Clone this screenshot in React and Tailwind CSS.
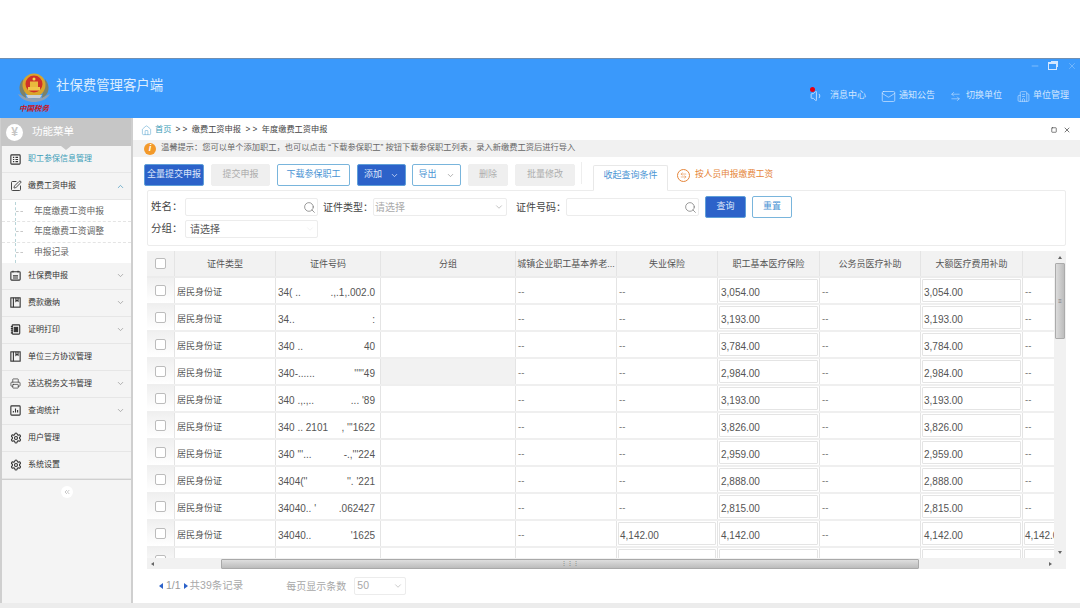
import {
  Home,
  Search,
  ChevronDown,
  ChevronUp,
  SquarePen,
  Settings,
  X,
  Minus,
  Mail,
  ArrowLeftRight,
  Building2,
  Volume1,
  Printer,
  ChevronsLeft,
  Square,
} from "lucide-react";

const FONT = "font-['Liberation_Sans','Noto_Sans_CJK_SC',sans-serif]";

/* ================= DATA ================= */

const MENU_TOP = [{ label: "职工参保信息管理", icon: "table", active: true }];

const MENU_REST = [
  { label: "社保费申报", icon: "calendar", arrow: true },
  { label: "费款缴纳", icon: "book", arrow: true },
  { label: "证明打印", icon: "note", arrow: true },
  { label: "单位三方协议管理", icon: "book" },
  { label: "送达税务文书管理", icon: "printer", arrow: true },
  { label: "查询统计", icon: "chart", arrow: true },
  { label: "用户管理", icon: "gear" },
  { label: "系统设置", icon: "gear" },
];

const SUB_MENU = ["年度缴费工资申报", "年度缴费工资调整", "申报记录"];

const COLUMNS = [
  { label: "证件类型", w: "w-[101px]" },
  { label: "证件号码", w: "w-[105px]" },
  { label: "分组", w: "w-[135px]" },
  { label: "城镇企业职工基本养老...", w: "w-[101px]" },
  { label: "失业保险", w: "w-[101px]" },
  { label: "职工基本医疗保险", w: "w-[102px]" },
  { label: "公务员医疗补助", w: "w-[101px]" },
  { label: "大额医疗费用补助", w: "w-[102px]" },
  { label: "", w: "w-[60px]" },
];

const ROWS = [
  { idL: "34(  ..", idR: ".,.1,.002.0", pay: "3,054.00" },
  { idL: "34..", idR: ":", pay: "3,193.00" },
  { idL: "340  ..", idR: "40", pay: "3,784.00" },
  { idL: "340-......", idR: "'''''49", pay: "2,984.00", shaded: true },
  { idL: "340 .,.,..", idR: "... '89", pay: "3,193.00" },
  { idL: "340 .. 2101", idR: ", '''1622", pay: "3,826.00" },
  { idL: "340 '''...", idR: "-.,'''224", pay: "2,959.00" },
  { idL: "3404(''", idR: "''. '221", pay: "2,888.00" },
  { idL: "34040.. '", idR: ".062427", pay: "2,815.00" },
  { idL: "34040..", idR: "'1625", pay: "4,142.00", full: true },
  { idL: "", idR: "", pay: "", full: true, blank: true },
];

/* ================= ICONS ================= */

function Emblem() {
  return (
    <svg width="34" height="30" viewBox="0 0 34 30" className="block">
      <path d="M1 21C4 27 12 29 17 29S30 27 33 21L28 23C24 26 10 26 6 23Z" fill="#8ea0b4" />
      <path d="M6 6C0 13 2 22 9 25L8 17Z" fill="#7d8268" />
      <path d="M28 6C34 13 32 22 25 25L26 17Z" fill="#7d8268" />
      <circle cx="17" cy="12" r="11.5" fill="#d9a52b" />
      <circle cx="17" cy="11" r="8.5" fill="#cf3128" />
      <path d="M11 14h12v3.5H11z" fill="#f0c64a" />
      <path d="M13 8.5h8v5.5h-8z" fill="#e9b93d" />
      <circle cx="17" cy="6" r="1.5" fill="#f6d84e" />
      <path d="M9 22h16l-2 3H11z" fill="#c9cfd6" />
    </svg>
  );
}

function MenuIcon({ name }) {
  const box = "w-[11px] h-[11px] text-[#333]";
  if (name === "table")
    return (
      <svg viewBox="0 0 13 13" className={box} fill="none" stroke="currentColor" strokeWidth="1.3">
        <rect x="1" y="1" width="11" height="11" rx="1" />
        <path d="M3.5 4h1.5M6.5 4h3M3.5 6.5h1.5M6.5 6.5h3M3.5 9h1.5M6.5 9h3" />
      </svg>
    );
  if (name === "calendar")
    return (
      <svg viewBox="0 0 13 13" className={box} fill="none" stroke="currentColor" strokeWidth="1.3">
        <rect x="1" y="2" width="11" height="10" rx="1" />
        <path d="M3.5 1v2M9.5 1v2M3.5 7h6M3.5 9.5h6" />
      </svg>
    );
  if (name === "book")
    return (
      <svg viewBox="0 0 13 13" className={box} fill="none" stroke="currentColor" strokeWidth="1.3">
        <rect x="1" y="1" width="11" height="11" />
        <path d="M4 1v11M7 1v4l1.2-1 1.3 1V1" />
      </svg>
    );
  if (name === "note")
    return (
      <svg viewBox="0 0 13 13" className={box} fill="none" stroke="currentColor" strokeWidth="1.3">
        <rect x="2.5" y="1" width="9" height="11" rx="1" />
        <path d="M1 3h2.5M1 5.5h2.5M1 8h2.5M1 10.5h2.5" />
        <rect x="5" y="4" width="4" height="5" fill="currentColor" />
      </svg>
    );
  if (name === "printer") return <Printer size={11} strokeWidth={1.5} className="text-[#333]" />;
  if (name === "chart")
    return (
      <svg viewBox="0 0 13 13" className={box} fill="none" stroke="currentColor" strokeWidth="1.3">
        <rect x="1" y="1" width="11" height="11" rx="1" />
        <path d="M4 9V7M6.5 9V4M9 9V6" />
      </svg>
    );
  if (name === "gear") return <Settings size={12} strokeWidth={2.2} className="text-[#333]" />;
  return <SquarePen size={12} strokeWidth={1.8} className="text-[#333]" />;
}

/* ================= HEADER ================= */

function TopLink({ icon, label, gap }) {
  return (
    <div className={`flex items-center ${gap}`}>
      {icon}
      <span className="text-[9px] text-[#d3e7ff]">{label}</span>
    </div>
  );
}

function Header() {
  return (
    <header className="h-[60px] bg-[#3a99fb] border-t border-[#6f8fb3] flex shrink-0">
      <div className="flex items-center pl-[17px]">
        <div className="flex flex-col items-center w-[34px] pt-[10px]">
          <Emblem />
          <span className="text-[7.5px] leading-[11px] text-[#c8161d] font-bold italic whitespace-nowrap">中国税务</span>
        </div>
        <span className="ml-[5px] -mt-[4px] text-[13.4px] text-[#dcedff]">社保费管理客户端</span>
      </div>
      <div className="ml-auto flex flex-col w-[259px] mr-[11px]">
        <div className="flex justify-end items-center gap-[7px] h-[11px] mt-[1px] -mr-[8px] text-[#b9dcff]">
          <Minus size={10} strokeWidth={1.3} />
          <div className="relative w-[9px] h-[8px] mr-[1px] ml-[1px] border border-[#d3e7ff] border-t-2">
            <span className="absolute -top-[3px] -right-[2px] w-[7px] h-[6px] border-t border-r border-[#d3e7ff]" />
          </div>
          <X size={10} strokeWidth={1} className="ml-[2px]" />
        </div>
        <div className="flex items-center justify-between mt-[15px] h-[20px]">
          <TopLink
            gap="gap-[6px]"
            label="消息中心"
            icon={
              <span className="relative">
                <Volume1 size={14} strokeWidth={1.4} className="text-[#d3e7ff]" />
                <span className="absolute -top-[2px] left-0 w-[5px] h-[5px] rounded-full bg-[#e60012]" />
              </span>
            }
          />
          <TopLink gap="gap-[3px]" label="通知公告" icon={<Mail size={15} strokeWidth={1.1} className="text-[#d3e7ff]" />} />
          <TopLink gap="gap-[5px]" label="切换单位" icon={<ArrowLeftRight size={11} strokeWidth={1.2} className="text-[#d3e7ff]" />} />
          <TopLink gap="gap-[3px]" label="单位管理" icon={<Building2 size={13} strokeWidth={1.1} className="text-[#d3e7ff]" />} />
        </div>
      </div>
    </header>
  );
}

/* ================= SIDEBAR ================= */

function MenuItem({ item, open }) {
  return (
    <div className="h-[27px] flex items-center pl-[7px] pr-[5px] border-b border-[#e6e6e6] shrink-0">
      <span className="w-[13px] h-[13px] flex items-center justify-center">
        <MenuIcon name={item.icon} />
      </span>
      <span className={`ml-[6px] text-[8px] ${item.active ? "text-[#3d9db8]" : "text-[#333]"}`}>{item.label}</span>
      {item.arrow &&
        (open ? (
          <ChevronUp size={9} className="ml-auto mr-[1px] text-[#4d9cc0]" />
        ) : (
          <ChevronDown size={9} className="ml-auto mr-[1px] text-[#999]" />
        ))}
    </div>
  );
}

function Sidebar() {
  return (
    <aside className="w-[133px] shrink-0 bg-[#f4f4f4] border-l-2 border-r-2 border-[#cfcfcf] flex flex-col">
      <div className="relative h-[28px] -ml-[1px] bg-[#c6c6c6] flex items-center pl-[5px] shrink-0">
        <span className="w-[17px] h-[17px] rounded-full bg-white text-[#c6c6c6] flex items-center justify-center text-[12px] font-bold">¥</span>
        <span className="ml-[9px] text-[10.5px] text-white">功能菜单</span>
        <span className="absolute left-[60px] -bottom-[4px] w-0 h-0 border-x-[5px] border-x-transparent border-t-[4px] border-t-[#c6c6c6]" />
      </div>
      {MENU_TOP.map((m) => (
        <MenuItem key={m.label} item={m} />
      ))}
      <MenuItem item={{ label: "缴费工资申报", icon: "pen", arrow: true }} open />
      <div className="bg-white pt-[2px] shrink-0">
        {SUB_MENU.map((s) => (
          <div key={s} className="h-[20.3px] flex items-center pl-[13px] border-b border-dashed border-[#e4e4e4] last:border-b-0">
            <span className="w-[9px] h-full border-l border-dashed border-[#b8d4d8] flex items-center">
              <span className="w-[7px] border-t border-dashed border-[#c8c8c8]" />
            </span>
            <span className="ml-[10px] text-[8.75px] text-[#666]">{s}</span>
          </div>
        ))}
      </div>
      {MENU_REST.map((m) => (
        <MenuItem key={m.label} item={m} />
      ))}
      <div className="border-t border-[#cfcfcf] pt-[6px] flex items-center justify-center">
        <span className="w-[12px] h-[12px] rounded-full bg-white flex items-center justify-center">
          <ChevronsLeft size={8} className="text-[#aaa]" />
        </span>
      </div>
    </aside>
  );
}

/* ================= TOOLBAR ================= */

function Btn({ kind = "gray", className = "", children }) {
  const styles = {
    primary: "bg-[#2c62c9] text-[#dfe8fb] border-[#5f9fd8]",
    gray: "bg-[#efefef] text-[#adadad] border-[#efefef]",
    outline: "bg-white text-[#4a94d4] border-[#79b5dc]",
  };
  return (
    <div className={`h-[22px] rounded-[2px] border flex items-center justify-center text-[9px] shrink-0 ${styles[kind]} ${className}`}>
      {children}
    </div>
  );
}

function Toolbar() {
  return (
    <div className="flex items-end h-[26px] pl-[11px] shrink-0">
      <div className="flex items-center h-[26px] pb-[4px]">
        <Btn kind="primary" className="w-[60px]">全量提交申报</Btn>
        <Btn className="w-[59px] ml-[7px]">提交申报</Btn>
        <Btn kind="outline" className="w-[73px] ml-[7px]">下载参保职工</Btn>
        <Btn kind="primary" className="w-[49px] ml-[7px] gap-[8px]">
          添加 <ChevronDown size={9} />
        </Btn>
        <Btn kind="outline" className="w-[49px] ml-[6px] gap-[9px]">
          导出 <ChevronDown size={9} className="text-[#999]" />
        </Btn>
        <Btn className="w-[40px] ml-[7px]">删除</Btn>
        <Btn className="w-[60px] ml-[7px]">批量修改</Btn>
      </div>
      <span className="ml-[6px] mb-[6px] h-[22px] border-l border-[#eee]" />
      <div className="relative z-10 ml-[11px] w-[75px] h-[26px] -mb-px pb-[4px] bg-white border border-[#e8e8e8] border-b-white rounded-t-[2px] flex items-center justify-center text-[9px] text-[#4a94d4]">
        收起查询条件
      </div>
      <div className="flex items-center h-[22px] mb-[4px] ml-[9px] text-[8.7px] text-[#e5853a]">
        <span className="w-[13px] h-[13px] rounded-full border border-[#e5853a] flex items-center justify-center mr-[5px]">
          <ArrowLeftRight size={7} />
        </span>
        按人员申报缴费工资
      </div>
    </div>
  );
}

/* ================= QUERY ================= */

function Field({ width, placeholder, value, search, arrow }) {
  return (
    <div className={`h-[18px] border border-[#ececec] rounded-[2px] bg-white flex items-center justify-between pl-[1px] pr-[1px] shrink-0 ${width}`}>
      <span className={`text-[10px] ${value ? "text-[#555] pl-[3px]" : "text-[#aaa]"}`}>{value || placeholder}</span>
      {search && <Search size={13} strokeWidth={1.2} className="text-[#666]" />}
      {arrow && <ChevronDown size={10} strokeWidth={1.2} className="text-[#888] mr-[1px]" />}
      {value && <ChevronDown size={10} strokeWidth={1.2} className="text-[#e6e6e6] mr-[1px]" />}
    </div>
  );
}

function QueryPanel() {
  return (
    <section className="ml-[14px] mr-[14px] h-[56px] border border-[#ececec] rounded-[2px] pl-[3px] pt-[5px] shrink-0">
      <div className="flex items-center h-[22px]">
        <span className="w-[34px] text-[10.5px] text-[#444]">姓名：</span>
        <Field width="w-[133px]" search />
        <span className="ml-[5px] w-[50px] text-[10px] text-[#444] whitespace-nowrap">证件类型：</span>
        <Field width="w-[134px]" placeholder="请选择" arrow />
        <span className="ml-[9px] w-[50px] text-[10px] text-[#444] whitespace-nowrap">证件号码：</span>
        <Field width="w-[133px]" search />
        <Btn kind="primary" className="w-[41px] ml-[6px]">查询</Btn>
        <Btn kind="outline" className="w-[40px] ml-[6px]">重置</Btn>
      </div>
      <div className="flex items-center h-[18px] mt-[2px]">
        <span className="w-[34px] text-[10.5px] text-[#444]">分组：</span>
        <Field width="w-[133px]" value="请选择" />
      </div>
    </section>
  );
}

/* ================= TABLE ================= */

function Dash({ w }) {
  return <div className={`${w} shrink-0 h-full border-r border-[#e4e4e4] flex items-center pl-[2px] pt-[4px] text-[9.5px] text-[#666]`}>--</div>;
}

function Amount({ w, value, tight }) {
  return (
    <div className={`${w} shrink-0 h-full border-r border-[#e4e4e4] pl-[1px] pr-[1px] py-[1px] overflow-hidden`}>
      <div className={`h-full border border-[#e4e4e4] rounded-[1px] bg-white flex items-center pt-[3px] text-[10px] text-[#555] whitespace-nowrap ${tight ? "" : "pl-[1px]"}`}>{value}</div>
    </div>
  );
}

function Row({ row }) {
  return (
    <div className="flex h-[27px] border-b-2 border-[#efefef] shrink-0">
      <div className="w-[28px] shrink-0 h-full bg-gradient-to-b from-[#f0f0f0] to-white border-r border-[#e4e4e4] flex items-center justify-center">
        <span className="w-[11px] h-[11px] border border-[#bcbcbc] rounded-[2px] bg-white" />
      </div>
      <div className="w-[101px] shrink-0 h-full border-r border-[#e4e4e4] flex items-center pl-[2px] pt-[4px] text-[9px] text-[#555]">
        {!row.blank && "居民身份证"}
      </div>
      <div className="w-[105px] shrink-0 h-full border-r border-[#e4e4e4] flex items-center justify-between pr-[5px] pl-[2px] pt-[4px] text-[10px] text-[#555] whitespace-nowrap">
        <span>{row.idL}</span>
        <span>{row.idR}</span>
      </div>
      <div className={`w-[135px] shrink-0 h-full border-r border-[#e4e4e4] ${row.shaded ? "bg-[#f2f2f2]" : ""}`} />
      {row.blank ? <div className="w-[101px] shrink-0 h-full border-r border-[#e4e4e4]" /> : <Dash w="w-[101px]" />}
      {row.full ? <Amount w="w-[101px]" value={row.pay} /> : <Dash w="w-[101px]" />}
      <Amount w="w-[102px]" value={row.pay} />
      {row.blank ? <div className="w-[101px] shrink-0 h-full border-r border-[#e4e4e4]" /> : <Dash w="w-[101px]" />}
      <Amount w="w-[102px]" value={row.pay} />
      {row.full ? <Amount w="w-[60px]" value={row.pay} tight /> : <Dash w="w-[60px]" />}
    </div>
  );
}

function ScrollArrow({ dir }) {
  const shape = {
    up: "border-x-[2px] border-x-transparent border-b-[3px] border-b-[#666]",
    down: "border-x-[2px] border-x-transparent border-t-[3px] border-t-[#666]",
    left: "border-y-[2px] border-y-transparent border-r-[3px] border-r-[#666]",
    right: "border-y-[2px] border-y-transparent border-l-[3px] border-l-[#666]",
  };
  return <span className={`w-0 h-0 ${shape[dir]}`} />;
}

function DataTable() {
  return (
    <section className="ml-[14px] mt-[5px] w-[919px] h-[318px] flex flex-col shrink-0">
      <div className="flex h-[307px]">
        <div className="w-[907px] overflow-hidden flex flex-col">
          <div className="flex h-[27px] bg-[#f2f2f2] border-b-2 border-[#ececec] shrink-0">
            <div className="w-[28px] shrink-0 border-r border-[#e4e4e4] flex items-center justify-center">
              <span className="w-[11px] h-[11px] border border-[#bcbcbc] rounded-[2px] bg-white" />
            </div>
            {COLUMNS.map((c) => (
              <div key={c.label} className={`${c.w} shrink-0 border-r border-[#e4e4e4] flex items-center justify-center pt-[3px] text-[9px] text-[#555] whitespace-nowrap`}>
                {c.label}
              </div>
            ))}
          </div>
          {ROWS.map((r, i) => (
            <Row key={i} row={r} />
          ))}
        </div>
        <div className="w-[12px] bg-[#f1f1f1] flex flex-col items-center shrink-0">
          <span className="h-[12px] flex items-center">
            <ScrollArrow dir="up" />
          </span>
          <div className="w-[10px] h-[76px] bg-gradient-to-r from-[#dcdcdc] to-[#bdbdbd] border border-[#ababab] rounded-[1px] flex items-center justify-center text-[6px] text-[#777]">≡</div>
          <span className="mt-auto h-[12px] flex items-center">
            <ScrollArrow dir="down" />
          </span>
        </div>
      </div>
      <div className="h-[11px] bg-[#f1f1f1] flex items-center shrink-0">
        <span className="w-[8px] ml-[4px] flex items-center">
          <ScrollArrow dir="left" />
        </span>
        <div className="ml-[62px] w-[698px] h-[10px] bg-gradient-to-b from-[#dedede] to-[#bcbcbc] border border-[#a9a9a9] rounded-[1px] flex items-center justify-center text-[6px] text-[#777]">⋮⋮⋮</div>
        <span className="ml-auto mr-[14px] flex items-center">
          <ScrollArrow dir="right" />
        </span>
      </div>
    </section>
  );
}

/* ================= PAGE ================= */

function Pager() {
  return (
    <div className="flex items-center ml-[26px] mt-[8px] h-[18px] shrink-0 text-[10px] text-[#a8a8a8]">
      <span className="w-0 h-0 border-y-[3px] border-y-transparent border-r-[4px] border-r-[#2c62c9]" />
      <span className="mx-[3px] text-[10.5px] text-[#999]">1/1</span>
      <span className="w-0 h-0 border-y-[3px] border-y-transparent border-l-[4px] border-l-[#2c62c9]" />
      <span className="ml-[2px] text-[10.5px]">共39条记录</span>
      <span className="ml-[43px]">每页显示条数</span>
      <div className="ml-[8px] w-[52px] h-[18px] border border-[#ececec] rounded-[2px] flex items-center justify-between pl-[2px] pr-[2px]">
        <span className="text-[10.5px]">50</span>
        <ChevronDown size={10} strokeWidth={1.2} className="text-[#999]" />
      </div>
    </div>
  );
}

export default function App() {
  return (
    <div className={`${FONT} w-[1080px] h-[608px] overflow-hidden bg-white flex flex-col`}>
      <div className="h-[58px] shrink-0" />
      <Header />
      <div className="flex h-[485px] shrink-0">
        <Sidebar />
        <main className="flex-1 min-w-0 flex flex-col">
          <div className="h-[22px] flex items-center pl-[8px] pr-[9px] pt-[2px] shrink-0">
            <Home size={11} strokeWidth={1.2} className="text-[#58a5cf]" />
            <span className="ml-[3px] text-[8.2px] text-[#3d9db8]">首页</span>
            <span className="ml-[4px] text-[8.2px] text-[#444] whitespace-pre">&gt; &gt;  缴费工资申报  &gt; &gt;  年度缴费工资申报</span>
            <span className="ml-auto flex items-center gap-[6px] text-[#333]">
              <Square size={6} strokeWidth={2.5} />
              <X size={8} strokeWidth={2} />
            </span>
          </div>
          <div className="h-[17px] bg-[#f1f1f1] flex items-center pl-[11px] shrink-0">
            <span className="w-[12px] h-[12px] rounded-full bg-[#f39a2b] text-white flex items-center justify-center text-[9px] font-bold italic">
              i
            </span>
            <span className="ml-[5px] text-[8.25px] text-[#666] whitespace-nowrap">
              温馨提示：您可以单个添加职工，也可以点击 “下载参保职工” 按钮下载参保职工列表，录入新缴费工资后进行导入
            </span>
          </div>
          <div className="h-[7px] shrink-0" />
          <Toolbar />
          <QueryPanel />
          <DataTable />
          <Pager />
        </main>
      </div>
      <div className="flex-1 bg-[#ececec]" />
    </div>
  );
}
